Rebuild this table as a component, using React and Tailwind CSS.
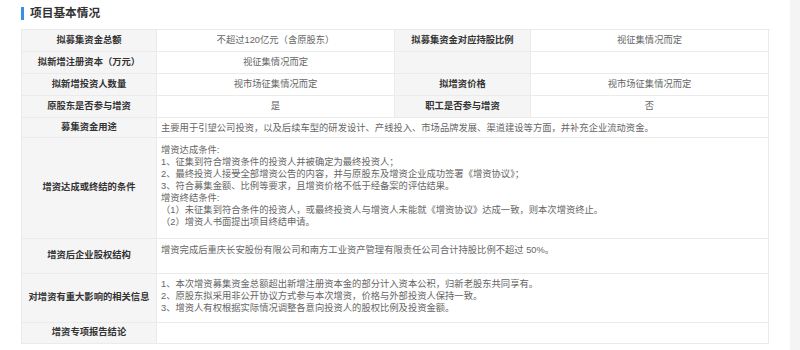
import React from 'react';

const font = "font-['Liberation_Sans','Noto_Sans_CJK_SC',sans-serif]";

const Label = ({ children, className = '' }) => (
  <div className={`flex items-center justify-center border-r border-b border-[#ebebeb] bg-[#f5f5f5] font-bold text-[#333] ${className}`}>
    {children}
  </div>
);

const Value = ({ children, className = '' }) => (
  <div className={`flex items-center justify-center border-r border-b border-[#ebebeb] bg-white text-[#666] ${className}`}>
    {children}
  </div>
);

const Block = ({ lines, className = '' }) => (
  <div className={`col-span-3 border-r border-b border-[#ebebeb] bg-white pl-[4px] text-[#666] leading-[12px] ${className}`}>
    {lines.map((l, i) => (
      <div key={i} className="whitespace-nowrap">{l}</div>
    ))}
  </div>
);

export default function App() {
  return (
    <div className={`flex h-[350px] w-[800px] bg-white ${font}`}>
      <div className="w-[790px] px-[21px] pt-[4px]">
        {/* Title */}
        <div className="flex h-[18px] items-center gap-[6px]">
          <div className="h-[13px] w-[3px] bg-[#3a8ee6]" />
          <h2 className="text-[11.7px] font-bold text-[#333]">项目基本情况</h2>
        </div>

        {/* Table */}
        <div className="mt-[7px] grid w-[749px] grid-cols-[135px_238px_136px_238px] grid-rows-[22px_22px_22px_22px_20px_101px_35px_49px_21px] border-t border-l border-[#ebebeb] text-[9.3px]">
          <Label>拟募集资金总额</Label>
          <Value>不超过120亿元（含原股东）</Value>
          <Label>拟募集资金对应持股比例</Label>
          <Value>视征集情况而定</Value>

          <Label>拟新增注册资本（万元）</Label>
          <Value>视征集情况而定</Value>
          <Label />
          <Value />

          <Label>拟新增投资人数量</Label>
          <Value>视市场征集情况而定</Value>
          <Label>拟增资价格</Label>
          <Value>视市场征集情况而定</Value>

          <Label>原股东是否参与增资</Label>
          <Value>是</Value>
          <Label>职工是否参与增资</Label>
          <Value>否</Value>

          <Label>募集资金用途</Label>
          <Block
            className="flex flex-col justify-center"
            lines={['主要用于引望公司投资，以及后续车型的研发设计、产线投入、市场品牌发展、渠道建设等方面，并补充企业流动资金。']}
          />

          <Label>增资达成或终结的条件</Label>
          <Block
            className="pt-[6px]"
            lines={[
              '增资达成条件:',
              '1、征集到符合增资条件的投资人并被确定为最终投资人；',
              '2、最终投资人接受全部增资公告的内容，并与原股东及增资企业成功签署《增资协议》；',
              '3、符合募集金额、比例等要求，且增资价格不低于经备案的评估结果。',
              '增资终结条件:',
              '（1）未征集到符合条件的投资人，或最终投资人与增资人未能就《增资协议》达成一致，则本次增资终止。',
              '（2）增资人书面提出项目终结申请。',
            ]}
          />

          <Label>增资后企业股权结构</Label>
          <Block
            className="pt-[5px]"
            lines={['增资完成后重庆长安股份有限公司和南方工业资产管理有限责任公司合计持股比例不超过 50%。']}
          />

          <Label>对增资有重大影响的相关信息</Label>
          <Block
            className="pt-[4px]"
            lines={[
              '1、本次增资募集资金总额超出新增注册资本金的部分计入资本公积，归新老股东共同享有。',
              '2、原股东拟采用非公开协议方式参与本次增资，价格与外部投资人保持一致。',
              '3、增资人有权根据实际情况调整各意向投资人的股权比例及投资金额。',
            ]}
          />

          <Label>增资专项报告结论</Label>
          <Block lines={[]} />
        </div>
      </div>
      <div className="h-full w-[10px] bg-[#f4f4f4]" />
    </div>
  );
}
